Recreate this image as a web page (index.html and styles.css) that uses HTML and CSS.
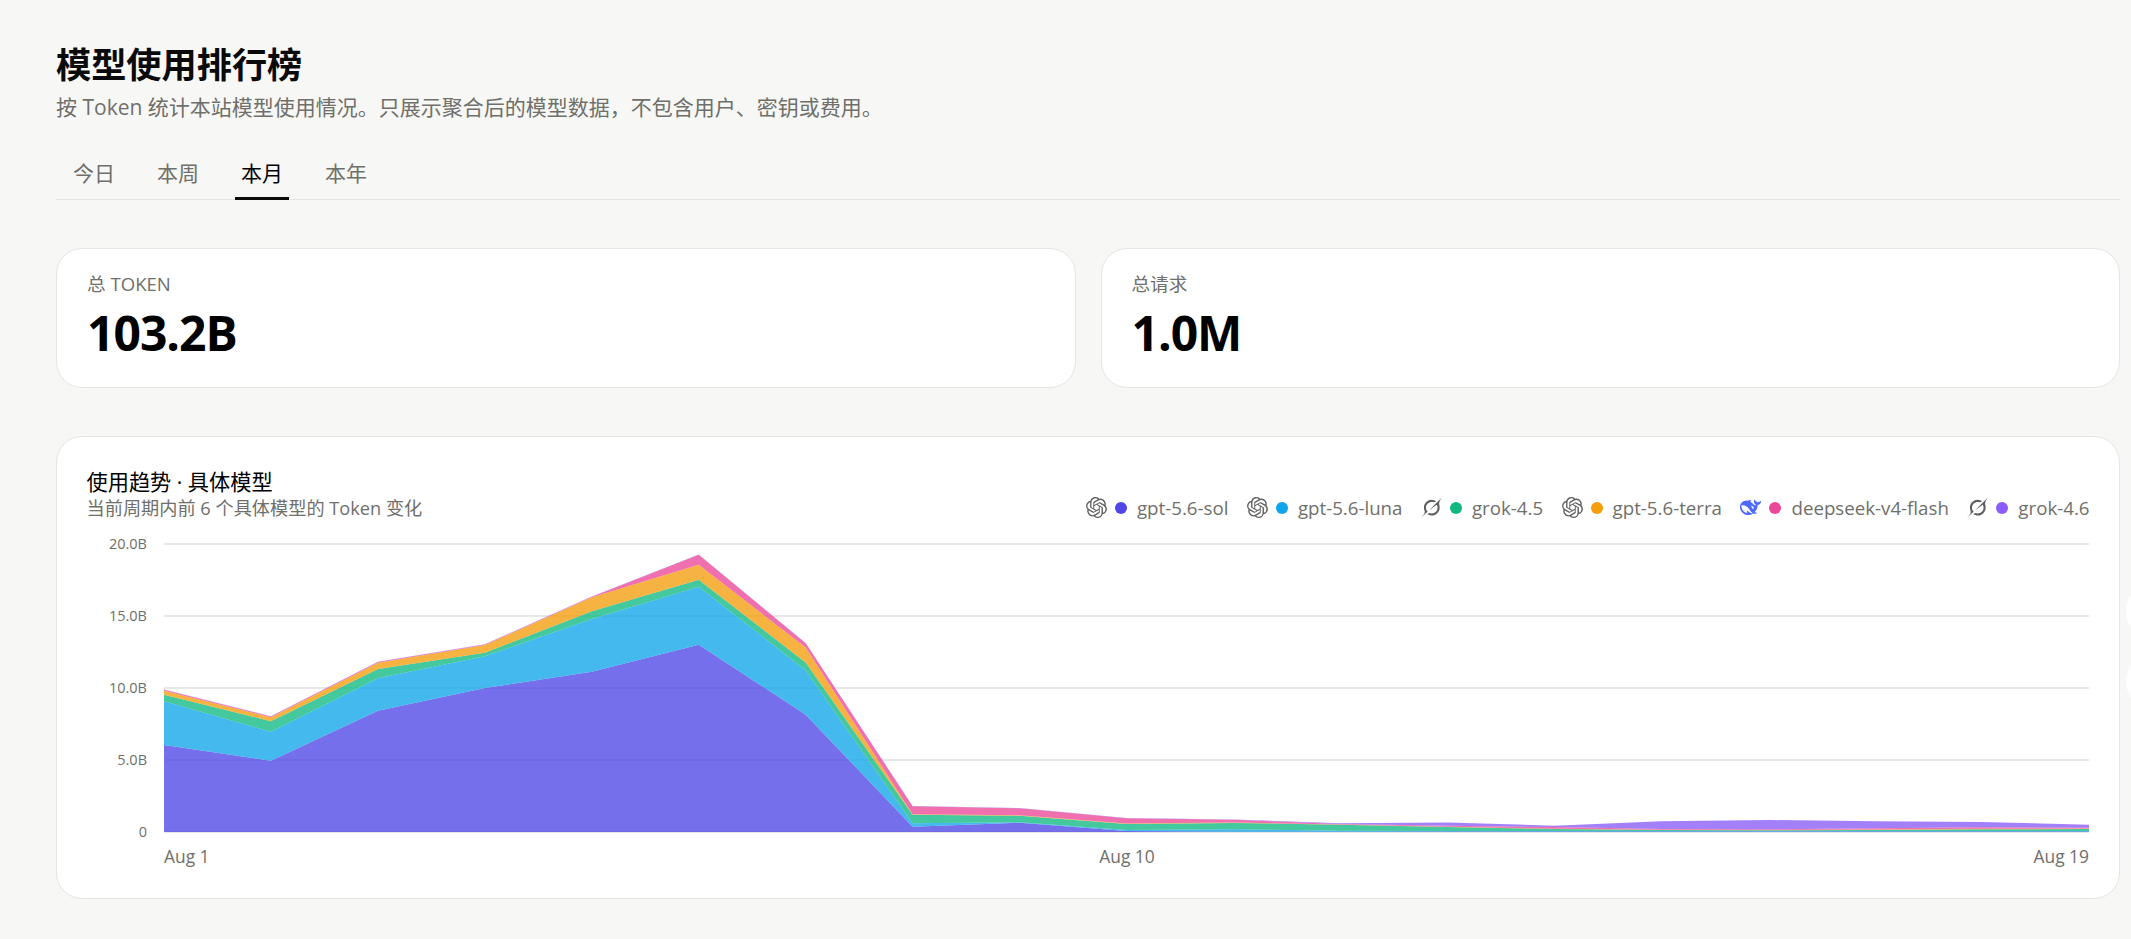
FILE: index.html
```html
<!doctype html>
<html lang="zh-CN">
<head>
<meta charset="utf-8">
<title>模型使用排行榜</title>
  <link rel="stylesheet" href="styles.css">
</head>
<body>
  <svg class="icon-defs" width="0" height="0" aria-hidden="true">
    <symbol id="icon-openai" viewBox="0 0 24 24">
      <path d="M22.2819 9.8211a5.9847 5.9847 0 0 0-.5157-4.9108 6.0462 6.0462 0 0 0-6.5098-2.9A6.0651 6.0651 0 0 0 4.9807 4.1818a5.9847 5.9847 0 0 0-3.9977 2.9 6.0462 6.0462 0 0 0 .7427 7.0966 5.98 5.98 0 0 0 .511 4.9107 6.051 6.051 0 0 0 6.5146 2.9001A5.9847 5.9847 0 0 0 13.2599 24a6.0557 6.0557 0 0 0 5.7718-4.2058 5.9894 5.9894 0 0 0 3.9977-2.9001 6.0557 6.0557 0 0 0-.7475-7.0729zm-9.022 12.6081a4.4755 4.4755 0 0 1-2.8764-1.0408l.1419-.0804 4.7783-2.7582a.7948.7948 0 0 0 .3927-.6813v-6.7369l2.02 1.1686a.071.071 0 0 1 .038.052v5.5826a4.504 4.504 0 0 1-4.4945 4.4944zm-9.6607-4.1254a4.4708 4.4708 0 0 1-.5346-3.0137l.142.0852 4.783 2.7582a.7712.7712 0 0 0 .7806 0l5.8428-3.3685v2.3324a.0804.0804 0 0 1-.0332.0615L9.74 19.9502a4.4992 4.4992 0 0 1-6.1408-1.6464zM2.3408 7.8956a4.485 4.485 0 0 1 2.3655-1.9728V11.6a.7664.7664 0 0 0 .3879.6765l5.8144 3.3543-2.0201 1.1685a.0757.0757 0 0 1-.071 0l-4.8303-2.7865A4.504 4.504 0 0 1 2.3408 7.872zm16.5963 3.8558L13.1038 8.364 15.1192 7.2a.0757.0757 0 0 1 .071 0l4.8303 2.7913a4.4944 4.4944 0 0 1-.6765 8.1042v-5.6772a.79.79 0 0 0-.407-.667zm2.0107-3.0231l-.142-.0852-4.7735-2.7818a.7759.7759 0 0 0-.7854 0L9.409 9.2297V6.8974a.0662.0662 0 0 1 .0284-.0615l4.8303-2.7866a4.4992 4.4992 0 0 1 6.6802 4.66zM8.3065 12.863l-2.02-1.1638a.0804.0804 0 0 1-.038-.0567V6.0742a4.4992 4.4992 0 0 1 7.3757-3.4537l-.142.0805L8.704 5.459a.7948.7948 0 0 0-.3927.6813zm1.0976-2.3654l2.602-1.4998 2.6069 1.4998v2.9994l-2.5974 1.4997-2.6067-1.4997Z"/>
    </symbol>
    <symbol id="icon-grok" viewBox="0 0 24 24">
      <path d="M9.27 15.29l7.978-5.897c.391-.29.95-.177 1.137.272.98 2.369.542 5.215-1.41 7.169-1.951 1.954-4.667 2.382-7.149 1.406l-2.711 1.257c3.889 2.661 8.611 2.003 11.562-.953 2.341-2.344 3.066-5.539 2.388-8.42l.006.007c-.983-4.232.242-5.924 2.75-9.383.06-.082.12-.164.179-.248l-3.301 3.305v-.01L9.267 15.292M7.623 16.723c-2.792-2.67-2.31-6.801.071-9.184 1.761-1.763 4.647-2.483 7.166-1.425l2.705-1.25a7.808 7.808 0 00-1.829-1A8.975 8.975 0 005.984 5.83c-2.533 2.536-3.33 6.436-1.962 9.764 1.022 2.487-.653 4.246-2.34 6.022-.599.63-1.199 1.259-1.682 1.925l7.62-6.815"/>
    </symbol>
    <symbol id="icon-deepseek" viewBox="0 0 24 24">
      <path d="M23.748 4.482c-.254-.124-.364.113-.512.234-.051.039-.094.09-.137.136-.372.397-.806.657-1.373.626-.829-.046-1.537.214-2.163.848-.133-.782-.575-1.248-1.247-1.548-.352-.156-.708-.311-.955-.65-.172-.241-.219-.51-.305-.774-.055-.16-.11-.323-.293-.35-.2-.031-.278.136-.356.276-.313.572-.434 1.202-.422 1.84.027 1.436.633 2.58 1.838 3.393.137.093.172.187.129.323-.082.28-.18.552-.266.833-.055.179-.137.217-.329.14a5.526 5.526 0 01-1.736-1.18c-.857-.828-1.631-1.742-2.597-2.458a11.365 11.365 0 00-.689-.471c-.985-.957.13-1.743.388-1.836.27-.098.093-.432-.779-.428-.872.004-1.67.295-2.687.684a3.055 3.055 0 01-.465.137 9.597 9.597 0 00-2.883-.102c-1.885.21-3.39 1.102-4.497 2.623C.082 8.606-.231 10.684.152 12.85c.403 2.284 1.569 4.175 3.36 5.653 1.858 1.533 3.997 2.284 6.438 2.14 1.482-.085 3.133-.284 4.994-1.86.47.234.962.327 1.78.397.63.059 1.236-.03 1.705-.128.735-.156.684-.837.419-.961-2.155-1.004-1.682-.595-2.113-.926 1.096-1.296 2.746-2.642 3.392-7.003.05-.347.007-.565 0-.845-.004-.17.035-.237.23-.256a4.173 4.173 0 001.545-.475c1.396-.763 1.96-2.015 2.093-3.517.02-.23-.004-.467-.247-.588zM11.581 18c-2.089-1.642-3.102-2.183-3.52-2.16-.392.024-.321.471-.235.763.09.288.207.486.371.739.114.167.192.416-.113.603-.673.416-1.842-.14-1.897-.167-1.361-.802-2.5-1.86-3.301-3.307-.774-1.393-1.224-2.887-1.298-4.482-.02-.386.093-.522.477-.592a4.696 4.696 0 011.529-.039c2.132.312 3.946 1.265 5.468 2.774.868.86 1.525 1.887 2.202 2.891.72 1.066 1.494 2.082 2.48 2.914.348.292.625.514.891.677-.802.09-2.14.11-3.054-.614zm1-6.44a.306.306 0 01.415-.287.302.302 0 01.2.288.306.306 0 01-.31.307.303.303 0 01-.305-.308zm3.11 1.596c-.2.081-.399.151-.59.16a1.245 1.245 0 01-.798-.254c-.274-.23-.47-.358-.552-.758a1.73 1.73 0 01.016-.588c.07-.327-.008-.537-.239-.727-.187-.156-.426-.199-.688-.199a.559.559 0 01-.254-.078c-.11-.054-.2-.19-.114-.358.028-.054.16-.186.192-.21.356-.202.767-.136 1.146.016.352.144.618.408 1.001.782.391.451.462.576.685.914.176.265.336.537.445.848.067.195-.019.354-.25.452z"/>
    </symbol>
  </svg>

  <main class="page">
    <h1 class="page-title">模型使用排行榜</h1>
    <p class="page-desc">按 Token 统计本站模型使用情况。只展示聚合后的模型数据，不包含用户、密钥或费用。</p>

    <nav class="tabs">
      <a class="tab" href="#">今日</a>
      <a class="tab" href="#">本周</a>
      <a class="tab active" href="#">本月</a>
      <a class="tab" href="#">本年</a>
    </nav>

    <section class="stats">
      <div class="card stat">
        <div class="stat-label">总 TOKEN</div>
        <div class="stat-value">103.2B</div>
      </div>
      <div class="card stat">
        <div class="stat-label">总请求</div>
        <div class="stat-value">1.0M</div>
      </div>
    </section>

    <section class="card trend">
      <header class="trend-head">
        <div>
          <h2 class="trend-title">使用趋势 · 具体模型</h2>
          <p class="trend-desc">当前周期内前 6 个具体模型的 Token 变化</p>
        </div>
        <ul class="legend">
          <li class="legend-item"><svg class="logo"><use href="#icon-openai"/></svg><i class="dot dot-sol"></i>gpt-5.6-sol</li>
          <li class="legend-item"><svg class="logo"><use href="#icon-openai"/></svg><i class="dot dot-luna"></i>gpt-5.6-luna</li>
          <li class="legend-item"><svg class="logo"><use href="#icon-grok"/></svg><i class="dot dot-grok45"></i>grok-4.5</li>
          <li class="legend-item"><svg class="logo"><use href="#icon-openai"/></svg><i class="dot dot-terra"></i>gpt-5.6-terra</li>
          <li class="legend-item"><svg class="logo logo-deepseek"><use href="#icon-deepseek"/></svg><i class="dot dot-flash"></i>deepseek-v4-flash</li>
          <li class="legend-item"><svg class="logo"><use href="#icon-grok"/></svg><i class="dot dot-grok46"></i>grok-4.6</li>
        </ul>
      </header>

      <!-- viewBox 用页面坐标，方便和截图对照 -->
      <svg id="chart" class="chart" viewBox="87 532 2002 340">
        <g class="grid">
          <line x1="164" x2="2089" y1="545" y2="545"/>
          <line x1="164" x2="2089" y1="617" y2="617"/>
          <line x1="164" x2="2089" y1="689" y2="689"/>
          <line x1="164" x2="2089" y1="761" y2="761"/>
          <line x1="164" x2="2089" y1="833" y2="833"/>
        </g>
        <g id="bands"></g>
        <g class="axis-y">
          <text x="147" y="550">20.0B</text>
          <text x="147" y="622">15.0B</text>
          <text x="147" y="694">10.0B</text>
          <text x="147" y="766">5.0B</text>
          <text x="147" y="838">0</text>
        </g>
        <g class="axis-x">
          <text x="164" y="864">Aug 1</text>
          <text x="1127" y="864" text-anchor="middle">Aug 10</text>
          <text x="2089" y="864" text-anchor="end">Aug 19</text>
        </g>
      </svg>
    </section>
  </main>

  <span class="edge-btn edge-btn-1"></span>
  <span class="edge-btn edge-btn-2"></span>

  <script src="chart.js"></script>
</body>
</html>
```
FILE: styles.css
```css
body {
  margin: 0;
  background: #f7f7f5;
  color: #0a0a0a;
  font-family: "Open Sans", "Noto Sans CJK SC", sans-serif;
}

.icon-defs {
  position: absolute;
}

.page {
  padding: 39px 11px 41px 56px;
}

.page-title {
  margin: 0;
  font-size: 35.2px;
  line-height: 50px;
  font-weight: 700;
}

.page-desc {
  margin: 3px 0 0;
  font-size: 21px;
  line-height: 30px;
  color: #6f6f6b;
}

/* tabs */
.tabs {
  display: flex;
  gap: 30px;
  margin-top: 33px;
  padding-left: 11px;
  border-bottom: 1.5px solid #e5e5e3;
}

.tab {
  padding: 0 6px 6px;
  margin-bottom: -1.5px;
  border-bottom: 3px solid transparent;
  font-size: 21px;
  line-height: 36px;
  color: #6f6f6b;
  text-decoration: none;
}

.tab.active {
  color: #000;
  border-bottom-color: #0a0a0a;
}

/* cards */
.card {
  box-sizing: border-box;
  background: #fff;
  border: 1.5px solid #e5e5e3;
  border-radius: 26px;
}

.stats {
  display: grid;
  grid-template-columns: 1fr 1fr;
  gap: 25px;
  margin-top: 48px;
}

.stat {
  height: 140px;
  padding: 22px 30px;
}

.stat-label {
  font-size: 18.6px;
  line-height: 26px;
  color: #6f6f6b;
}

.stat-value {
  margin-top: 6px;
  font-size: 48px;
  line-height: 60px;
  letter-spacing: -1px;
  font-weight: 700;
  color: #000;
}

.trend {
  height: 463px;
  margin-top: 48px;
  padding: 30px 29.5px 0;
}

.trend-head {
  display: flex;
  justify-content: space-between;
  align-items: flex-end;
}

.trend-title {
  margin: 0;
  font-size: 21.2px;
  line-height: 29px;
  font-weight: 400;
  color: #000;
}

.trend-desc {
  margin: 0;
  font-size: 18.2px;
  line-height: 24px;
  color: #6f6f6b;
}

.legend {
  display: flex;
  gap: 18.5px;
  margin: 0 0 -2px;
  padding: 0;
  list-style: none;
}

.legend-item {
  display: flex;
  align-items: center;
  font-size: 18.7px;
  line-height: 28px;
  color: #6f6f6b;
}

.logo {
  width: 21px;
  height: 21px;
  margin-right: 8px;
  fill: #5f5f5f;
}

.logo-deepseek {
  fill: #4d6bfe;
}

.dot {
  width: 12px;
  height: 12px;
  margin-right: 10px;
  border-radius: 50%;
}

.dot-sol { background: #4f46e5; }
.dot-luna { background: #0ea5e9; }
.dot-grok45 { background: #10b981; }
.dot-terra { background: #f59e0b; }
.dot-flash { background: #ec4899; }
.dot-grok46 { background: #8b5cf6; }

/* chart */
.chart {
  display: block;
  width: 2002px;
  height: 340px;
  margin-top: 11.5px;
}

.grid line {
  stroke: #e7e7e7;
  stroke-width: 1.8;
}

.axis-y text {
  font-size: 14.5px;
  fill: #6f6f6b;
  text-anchor: end;
}

.axis-x text {
  font-size: 17.4px;
  fill: #6f6f6b;
}

/* 右边露出来的悬浮按钮 */
.edge-btn {
  position: fixed;
  left: 2126px;
  width: 60px;
  height: 60px;
  border-radius: 50%;
  background: #fff;
}

.edge-btn-1 {
  top: 581px;
}

.edge-btn-2 {
  top: 651px;
}
```
FILE: chart.js
```js
// 每个模型堆叠后顶边的 y 坐标，从下往上
var baseline = 833
var step = (2089 - 164) / 18
var series = [
  { color: '#4f46e5', tops: [746, 761.7, 711.7, 689, 672.7, 645.7, 715.7, 827.7, 823.7, 832, 832.7, 832.7, 832.5, 832.5, 832.5, 832.5, 832.5, 832.5, 832.5] },
  { color: '#0ea5e9', tops: [702.3, 732.7, 679.3, 657.3, 620, 587.7, 671.5, 824.3, 823.2, 831, 830.3, 831.7, 832, 832, 832, 832, 832, 832, 832] },
  { color: '#10b981', tops: [695.7, 722.3, 670, 653.7, 612.3, 580.7, 663.5, 815.7, 816.7, 825, 824, 825.7, 828, 830, 831, 831.3, 831, 830.3, 830] },
  { color: '#f59e0b', tops: [691.7, 718.3, 663.7, 646, 598.3, 565.7, 648.5, 815.2, 816.2, 824.6, 823.6, 825.4, 827.8, 829.8, 830.7, 831, 830.6, 829.8, 829.5] },
  { color: '#ec4899', tops: [690.7, 717.5, 663, 645.5, 597.7, 555.8, 644.2, 807.3, 809.3, 819.3, 820.7, 825, 826.8, 828, 830, 830.3, 829.3, 828.3, 828.7] },
  { color: '#8b5cf6', tops: [690.5, 717.3, 662.8, 645.3, 597.4, 555.6, 644, 807, 809, 819, 820.4, 824.3, 823.5, 826.7, 822.3, 821, 822.3, 823, 825.7] }
]

var bands = document.getElementById('bands')
series.forEach(function (s, n) {
  var points = s.tops.map(function (y, i) {
    return (164 + step * i).toFixed(1) + ',' + y
  })
  // 下边沿着前一个模型的顶边走回来
  for (var i = s.tops.length - 1; i >= 0; i--) {
    var low = n === 0 ? baseline : series[n - 1].tops[i]
    points.push((164 + step * i).toFixed(1) + ',' + low)
  }
  var band = document.createElementNS('http://www.w3.org/2000/svg', 'polygon')
  band.setAttribute('points', points.join(' '))
  band.setAttribute('fill', s.color)
  band.setAttribute('fill-opacity', '0.78')
  bands.appendChild(band)
})
```
